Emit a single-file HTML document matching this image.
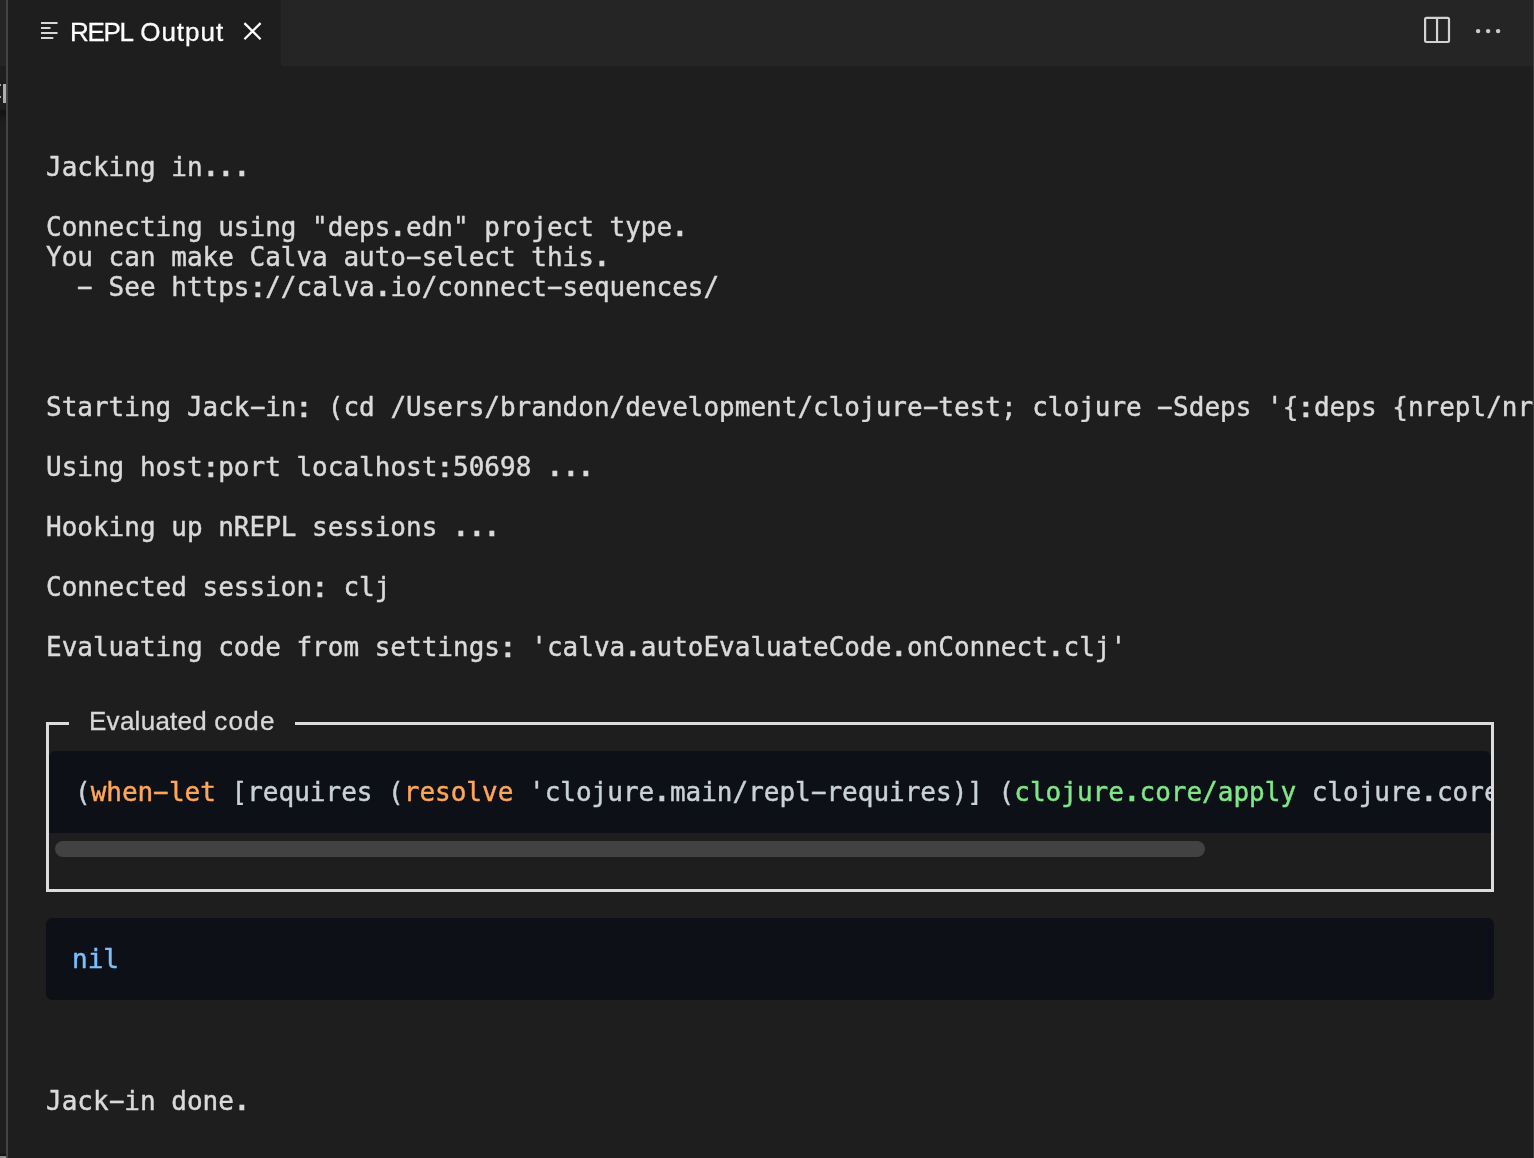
<!DOCTYPE html>
<html><head><meta charset="utf-8"><title>REPL Output</title>
<style>
html,body{margin:0;padding:0;}
body{width:1534px;height:1158px;overflow:hidden;background:#1e1e1e;position:relative;font-family:"Liberation Sans",sans-serif;color:#d8d8d8;}
.abs{position:absolute;}
#leftstrip{left:0;top:0;width:6px;height:1158px;background:#1e1e1e;}
#leftstrip .sh{left:0;top:109px;width:6px;height:14px;background:linear-gradient(#1e1e1e 0,#121212 2px,#141414 4px,#1e1e1e 14px);}
#leftstrip .b1{left:0;top:1154px;width:6px;height:2px;background:#141414;}
#leftstrip .b2{left:0;top:1156px;width:6px;height:2px;background:#8c8c8c;}
#leftstrip .t1{left:0;top:0;width:6px;height:66px;background:#252526;}
#leftstrip .t2{left:0;top:66px;width:6px;height:46px;background:#1e1e1e;}
#leftstrip .cur{left:3px;top:84px;width:3px;height:19px;background:#aeaeae;}
#leftstrip .f1{left:0;top:84px;width:1px;height:2px;background:#aaa;}
#leftstrip .f2{left:0;top:96px;width:1px;height:2px;background:#aaa;}
#leftborder{left:6px;top:0;width:2px;height:1158px;background:#444444;}
#rightborder{left:1533px;top:0;width:1px;height:1158px;background:#3c3c3c;}
#tabbar{left:8px;top:0;width:1525px;height:66px;background:#252526;}
#tab{left:8px;top:0;width:273px;height:66px;background:#1e1e1e;}
#tabtitle{-webkit-text-stroke:0.3px #fff;letter-spacing:0.2px;left:70px;top:16px;font-size:26px;line-height:32px;color:#ffffff;white-space:pre;}
.mono{-webkit-text-stroke:0.45px currentColor;font-family:"DejaVu Sans Mono","Liberation Mono",monospace;font-size:26px;line-height:30px;white-space:pre;color:#dadada;}
.line{left:46px;height:30px;}
#fs{left:46px;top:722px;width:1442px;height:164px;border:3px solid #dcdcdc;}
#legend{left:69px;top:700px;width:226px;height:44px;background:#1e1e1e;}
#legendtxt{-webkit-text-stroke:0.3px currentColor;left:89px;top:705px;font-size:26px;line-height:32px;color:#d8d8d8;white-space:pre;}
#code1{left:49px;top:751px;width:1442px;height:82px;background:#0d1117;border-radius:6px 6px 0 0;overflow:hidden;}
#code1 .t{left:26px;top:26px;color:#c9d1d9;}
#thumb{left:55px;top:841px;width:1150px;height:16px;border-radius:8px;background:#424242;}
#code2{left:46px;top:918px;width:1448px;height:82px;background:#0d1117;border-radius:6px;}
#code2 .t{left:26px;top:26px;color:#79c0ff;}
.h{display:inline-block;transform:translateY(-1px) scaleX(1.95);}
.d{display:inline-block;transform-origin:50% 24px;transform:scale(1.3);}
.c{display:inline-block;transform-origin:50% 17px;transform:scale(1.3,1.1);}
.o{color:#ffa657}.g{color:#7ee787}
</style></head><body><div id="wrap" style="position:absolute;left:0;top:0;width:1534px;height:1158px;will-change:transform">
<div id="leftstrip" class="abs"><div class="abs t1"></div><div class="abs t2"></div><div class="abs cur"></div><div class="abs f1"></div><div class="abs f2"></div><div class="abs sh"></div><div class="abs b1"></div><div class="abs b2"></div></div>
<div id="leftborder" class="abs"></div>
<div id="tabbar" class="abs"></div>
<div id="tab" class="abs"></div>
<div id="rightborder" class="abs"></div>
<svg class="abs" style="left:40px;top:20px" width="20" height="22" viewBox="0 0 20 22"><g fill="#d8d8d8"><rect x="1" y="2" width="16.5" height="2"/><rect x="1" y="7" width="9.5" height="2"/><rect x="1" y="12" width="16.5" height="2"/><rect x="1" y="17" width="12.3" height="2"/></g></svg>
<div id="tabtitle" class="abs"><span style="letter-spacing:-1.3px">REPL</span> <span style="letter-spacing:1px">Output</span></div>
<svg class="abs" style="left:240px;top:18px" width="26" height="26" viewBox="0 0 26 26"><path d="M4.4 5.1 L20.6 21.3 M20.6 5.1 L4.4 21.3" stroke="#ffffff" stroke-width="2.3" fill="none"/></svg>
<svg class="abs" style="left:1420px;top:12px" width="36" height="36" viewBox="0 0 36 36"><rect x="5.1" y="5.9" width="23.9" height="24.1" rx="1.4" fill="none" stroke="#d2d2d2" stroke-width="2.2"/><path d="M17.05 6 V30" stroke="#d2d2d2" stroke-width="2.2"/></svg>
<svg class="abs" style="left:1470px;top:24px" width="36" height="14" viewBox="0 0 36 14"><g fill="#cccccc"><circle cx="8.1" cy="7.1" r="2.2"/><circle cx="18.1" cy="7.1" r="2.2"/><circle cx="28.1" cy="7.1" r="2.2"/></g></svg>

<div class="abs mono line" style="top:152px">Jacking in<span class="d">.</span><span class="d">.</span><span class="d">.</span></div>
<div class="abs mono line" style="top:212px">Connecting using "deps<span class="d">.</span>edn" project type<span class="d">.</span></div>
<div class="abs mono line" style="top:242px">You can make Calva auto<span class="h">-</span>select this<span class="d">.</span></div>
<div class="abs mono line" style="top:272px">  <span class="h">-</span> See https<span class="c">:</span>//calva<span class="d">.</span>io/connect<span class="h">-</span>sequences/</div>
<div class="abs mono line" style="top:392px;width:1487px;overflow:hidden">Starting Jack<span class="h">-</span>in<span class="c">:</span> (cd /Users/brandon/development/clojure<span class="h">-</span>test; clojure <span class="h">-</span>Sdeps '{<span class="c">:</span>deps {nrepl/nrepl</div>
<div class="abs mono line" style="top:452px">Using host<span class="c">:</span>port localhost<span class="c">:</span>50698 <span class="d">.</span><span class="d">.</span><span class="d">.</span></div>
<div class="abs mono line" style="top:512px">Hooking up nREPL sessions <span class="d">.</span><span class="d">.</span><span class="d">.</span></div>
<div class="abs mono line" style="top:572px">Connected session<span class="c">:</span> clj</div>
<div class="abs mono line" style="top:632px">Evaluating code from settings<span class="c">:</span> 'calva<span class="d">.</span>autoEvaluateCode<span class="d">.</span>onConnect<span class="d">.</span>clj'</div>

<div id="fs" class="abs"></div>
<div id="legend" class="abs"></div>
<div id="legendtxt" class="abs"><span style="letter-spacing:0.27px">Evaluated</span><span style="letter-spacing:0"> </span><span style="letter-spacing:1.26px">code</span></div>
<div id="code1" class="abs"><div class="abs mono t">(<span class="o">when<span class="h">-</span>let</span> [requires (<span class="o">resolve</span> 'clojure<span class="d">.</span>main/repl<span class="h">-</span>requires)] (<span class="g">clojure<span class="d">.</span>core/apply</span> clojure<span class="d">.</span>core/require requires))</div></div>
<div id="thumb" class="abs"></div>
<div id="code2" class="abs"><div class="abs mono t">nil</div></div>
<div class="abs mono line" style="top:1086px">Jack<span class="h">-</span>in done<span class="d">.</span></div>
</div></body></html>
